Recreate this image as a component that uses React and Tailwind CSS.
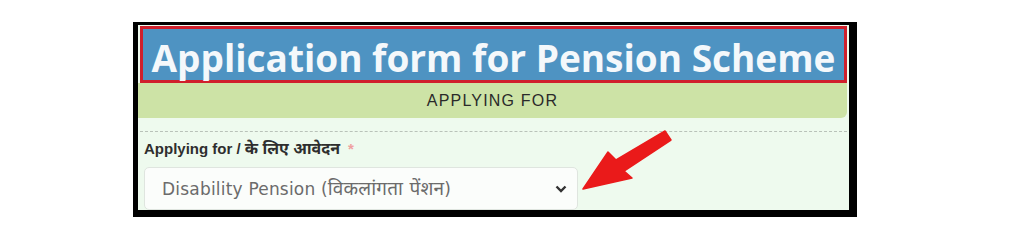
import React from 'react';

const PensionForm = () => {
    return (
        <div className="w-[1024px] h-[242px] bg-white pt-[22px] pl-[133px]">
            {/* Frame */}
            <div className="w-[724px] h-[195px] bg-black pt-[3px] pl-[5px] pr-[8px] pb-[7px]">
                <div className="h-full bg-[#eefaee] flex flex-col">
                    {/* Title */}
                    <div className="px-[2px] pt-[1px]">
                        <div className="h-[57px] bg-[#4e93c2] border-[3px] border-[#d01f2c] flex items-center justify-center">
                            <h1 className="whitespace-nowrap text-[37px] leading-none font-bold text-[#f4f8fb] [font-family:'Open_Sans',sans-serif] pt-[5px]">
                                Application form for Pension Scheme
                            </h1>
                        </div>
                    </div>

                    {/* Section bar */}
                    <div className="h-[38px] bg-[#cde3a6] rounded-br-[6px] mr-[2px] flex items-center justify-center">
                        <span className="text-[16px] tracking-[1.2px] text-[#2a2a2a] [font-family:'Liberation_Sans',sans-serif]">APPLYING FOR</span>
                    </div>

                    <div className="mt-[13px] mx-[2px] border-t border-dashed border-[#b9c2b9]" />

                    {/* Field */}
                    <div className="pl-[6px] pt-[4px] relative">
                        <label className="whitespace-nowrap text-[15px] font-bold text-[#2e2e2e] [font-family:'Liberation_Sans','Noto_Sans_Devanagari',sans-serif]">
                            Applying for / <span className="text-[16px]">के लिए आवेदन</span>
                            <span className="text-[#f0a0a0] ml-[8px]">*</span>
                        </label>
                        <div className="mt-[6px] w-[434px] h-[43px] bg-[#fbfdfb] border border-[#dfe5df] rounded-[5px] flex items-center justify-between pl-[17px] pr-[10px]">
                            <span className="whitespace-nowrap text-[17px] tracking-[0.2px] text-[#6b6b6b] [font-family:'DejaVu_Sans','Noto_Sans_Devanagari',sans-serif]">
                                Disability Pension (<span className="text-[19px]">विकलांगता पेंशन</span>)
                            </span>
                            <svg width="12" height="8" viewBox="0 0 12 8">
                                <path d="M1.5 1.5 L6 6 L10.5 1.5" fill="none" stroke="#333" strokeWidth="2.4" />
                            </svg>
                        </div>

                        {/* Red arrow overlay */}
                        <svg className="absolute left-[440px] top-[-5px]" width="100" height="70" viewBox="0 0 100 70">
                            <path d="M5 62 L30 25 L38 33 L87 4 L93 13 L46 44 L54 51 Z" fill="#ea1a1a" strokeLinejoin="round" stroke="#ea1a1a" strokeWidth="1.5" />
                        </svg>
                    </div>
                </div>
            </div>
        </div>
    );
};

export default function App() {
    return <PensionForm />;
}
